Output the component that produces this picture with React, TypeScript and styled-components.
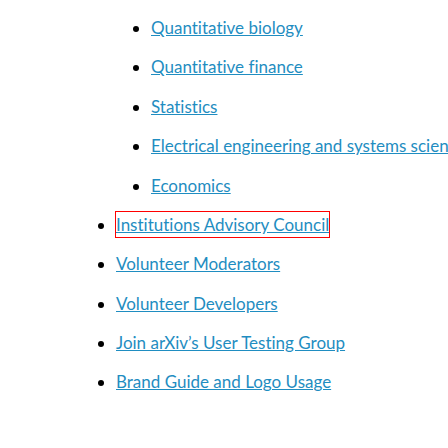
import React from "react";
import styled, { createGlobalStyle } from "styled-components";

const GlobalStyle = createGlobalStyle`
  body {
    margin: 0;
    background: #fff;
    color: #000;
    font-family: Lato, "Open Sans", sans-serif;
    font-size: 17px;
    line-height: 1.375;
    font-variant-ligatures: none;
    overflow-x: hidden;
  }
`;

const Page = styled.main`
  padding: 16px 0 48px 80px;
`;

const List = styled.ul`
  display: grid;
  row-gap: 16px;
  margin: 0;
  padding: 0 0 0 36px;
  list-style: disc;
`;

const NestedList = styled(List)`
  padding-left: 35px;
`;

const Item = styled.li`
  white-space: nowrap;
`;

const GroupItem = styled.li`
  list-style: none;
`;

const Link = styled.a<{ $focused?: boolean }>`
  color: #1f8dc1;
  text-decoration: underline;
  padding: 2px 0;
  outline: ${(p) => (p.$focused ? "1px solid #ff0000" : "none")};
`;

const archives = [
  "Quantitative biology",
  "Quantitative finance",
  "Statistics",
  "Electrical engineering and systems science",
  "Economics",
];

const groups = [
  "Institutions Advisory Council",
  "Volunteer Moderators",
  "Volunteer Developers",
  "Join arXiv’s User Testing Group",
  "Brand Guide and Logo Usage",
];

export default function App() {
  return (
    <Page>
      <GlobalStyle />
      <List>
        <GroupItem>
          <NestedList>
            {archives.map((name) => (
              <Item key={name}>
                <Link href="#">{name}</Link>
              </Item>
            ))}
          </NestedList>
        </GroupItem>
        {groups.map((name, i) => (
          <Item key={name}>
            <Link href="#" $focused={i === 0}>{name}</Link>
          </Item>
        ))}
      </List>
    </Page>
  );
}
